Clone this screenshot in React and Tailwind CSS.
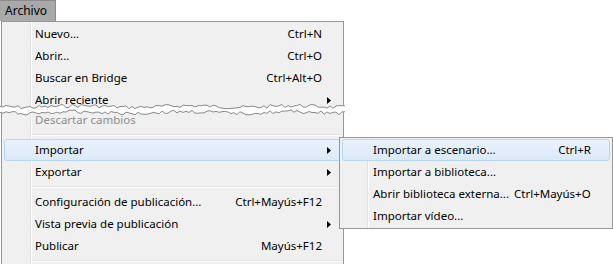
import React from 'react';

const mainItems = [
  { label: 'Nuevo...', shortcut: 'Ctrl+N' },
  { label: 'Abrir...', shortcut: 'Ctrl+O' },
  { label: 'Buscar en Bridge', shortcut: 'Ctrl+Alt+O' },
  { label: 'Abrir reciente', arrow: true },
  { label: 'Descartar cambios', disabled: true, tight: true },
  { sep: true },
  { label: 'Importar', arrow: true, active: true },
  { label: 'Exportar', arrow: true },
  { sep: true },
  { label: 'Configuración de publicación...', shortcut: 'Ctrl+Mayús+F12' },
  { label: 'Vista previa de publicación', arrow: true },
  { label: 'Publicar', shortcut: 'Mayús+F12' },
  { sep: true },
];

const subItems = [
  { label: 'Importar a escenario...', shortcut: 'Ctrl+R', pad: 'pr-[18px]', active: true },
  { label: 'Importar a biblioteca...' },
  { label: 'Abrir biblioteca externa...', shortcut: 'Ctrl+Mayús+O', pad: 'pr-[19px]' },
  { label: 'Importar vídeo...' },
];

const Arrow = () => (
  <svg width="4" height="7" viewBox="0 0 4 7" className="block">
    <path d="M0 0 L4 3.5 L0 7 Z" fill="#000" />
  </svg>
);

// línea dentada del menú "roto"
const jag = (base, seed) => {
  let s = seed;
  const pts = [];
  for (let x = 0; x <= 346; x += 3) {
    s = (s * 9301 + 49297) % 233280;
    const r = s / 233280;
    pts.push([x, base + (r - 0.5) * 3.5 + Math.sin(x / 17) * 0.8]);
  }
  return pts;
};

const Tear = () => {
  const top = jag(4.5, 7);
  const bot = jag(10.5, 31);
  const line = (p) => p.map(([x, y], i) => `${i ? 'L' : 'M'}${x} ${y.toFixed(1)}`).join(' ');
  const fill =
    line(top) + ' ' + bot.slice().reverse().map(([x, y]) => `L${x} ${y.toFixed(1)}`).join(' ') + ' Z';
  return (
    <svg width="346" height="16" viewBox="0 0 346 16" className="absolute left-0 top-[102px]">
      <path d={fill} fill="#fff" />
      <path d={line(top)} fill="none" stroke="#8a8a8a" strokeWidth="1" />
      <path d={line(bot)} fill="none" stroke="#8a8a8a" strokeWidth="1" />
    </svg>
  );
};

const Row = ({ item, shortcutPad = 'pr-[18px]' }) => (
  <div
    className={`relative h-[22px] flex items-center mx-[2px] rounded-[3px] border ${
      item.active
        ? 'border-[#b5d8f2] bg-gradient-to-b from-[#eaf3fc] to-[#dbe9f8]'
        : 'border-transparent'
    } ${item.tight ? 'mt-[-2px]' : ''}`}
  >
    <span className={`pl-[30px] flex-1 whitespace-nowrap ${item.disabled ? 'text-[#8d8d8d]' : 'text-black'}`}>
      {item.label}
    </span>
    {item.shortcut && <span className={`ml-[5px] whitespace-nowrap ${shortcutPad}`}>{item.shortcut}</span>}
    {item.arrow && (
      <span className="absolute right-[9px] top-[7px]">
        <Arrow />
      </span>
    )}
  </div>
);

const App = () => {
  return (
    <div
      className="relative w-[613px] h-[264px] bg-white overflow-hidden text-[11.5px] leading-none"
      style={{ fontFamily: '"Noto Sans", "Open Sans", sans-serif' }}
    >
      {/* barra de menú */}
      <div className="h-[21px] flex">
        <div className="w-[56px] h-[21px] bg-[#a9a9a9] border-r border-t border-[#8c8c8c] flex items-center pl-[5px] text-[12px] text-black">
          Archivo
        </div>
      </div>

      {/* menú Archivo */}
      <div className="relative ml-[1px] w-[343px] h-[260px] bg-[#f0f0f0] border border-[#979797] pt-[1px]">
        <div className="absolute left-[28px] top-0 bottom-0 w-[2px] border-l border-[#e2e3e3] border-r border-r-white" />
        {mainItems.map((item, i) =>
          item.sep ? (
            <div key={i} className="h-[8px] flex items-center pl-[29px] pr-[1px]">
              <div className="w-full h-[2px] border-t border-[#e2e3e3] border-b border-b-white" />
            </div>
          ) : (
            <Row key={i} item={item} />
          )
        )}
      </div>

      <Tear />

      {/* submenú Importar */}
      <div className="absolute left-[339px] top-[137px] w-[274px] h-[92px] bg-[#f0f0f0] border border-[#979797] pt-[1px]">
        <div className="absolute left-[27px] top-0 bottom-0 w-[2px] border-l border-[#e2e3e3] border-r border-r-white" />
        {subItems.map((item, i) => (
          <Row key={i} item={item} shortcutPad={item.pad} />
        ))}
      </div>
    </div>
  );
};

export default App;
